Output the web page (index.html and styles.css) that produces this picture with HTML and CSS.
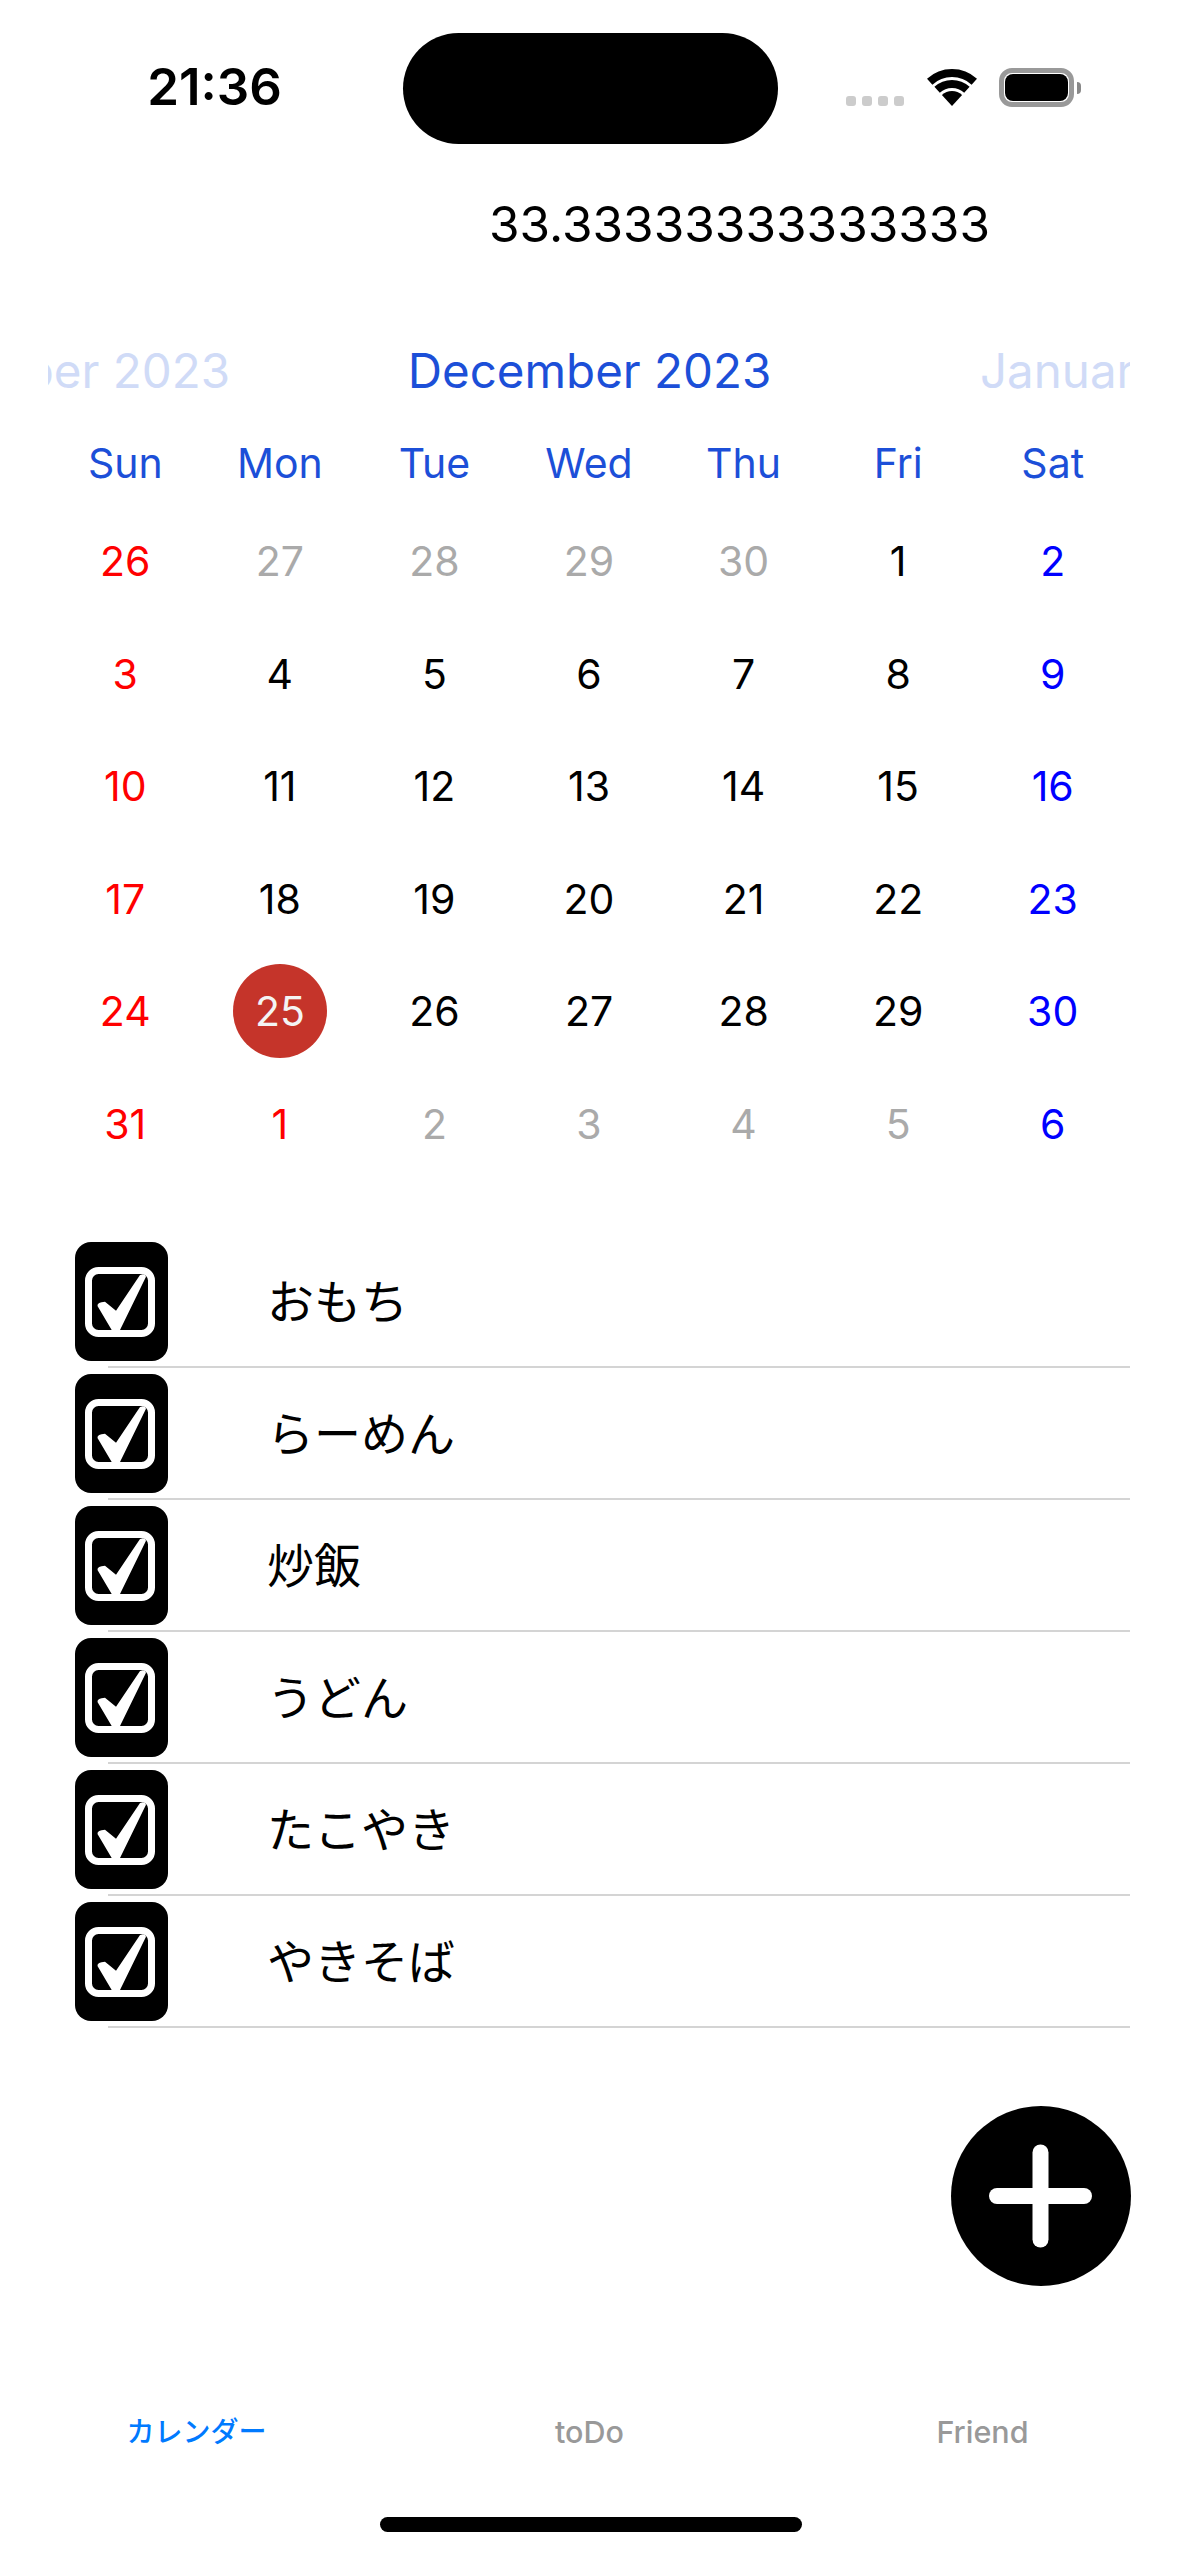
FILE: index.html
```html
<!DOCTYPE html>
<html lang="ja">

<head>
  <meta charset="utf8">
  <title>カレンダー</title>
  <link rel="stylesheet" href="styles.css">
</head>

<body>
  <header class="status">
    <div class="time">21:36</div>
    <div class="island"></div>
    <div class="indicators">
      <div class="signal"><i></i><i></i><i></i><i></i></div>
      <svg class="wifi" width="50" height="37" viewBox="0 0 50 37">
        <path d="M2.7 12.7A33 33 0 0 1 47.3 12.7" fill="none" stroke="#000" stroke-width="8" />
        <path d="M10.1 20.8A22 22 0 0 1 39.9 20.8" fill="none" stroke="#000" stroke-width="8" />
        <path d="M25 37L14.9 25.9A15 15 0 0 1 35.1 25.9Z" />
      </svg>
      <div class="battery"><div class="battery-level"></div></div>
      <div class="battery-nub"></div>
    </div>
  </header>

  <p class="balance">33.33333333333333</p>

  <section class="calendar">
    <div class="months">
      <div class="month-side month-prev"><span>November 2023</span></div>
      <div class="month-now">December 2023</div>
      <div class="month-side month-next"><span>January 2024</span></div>
    </div>
    <div class="weekdays">
      <div>Sun</div><div>Mon</div><div>Tue</div><div>Wed</div><div>Thu</div><div>Fri</div><div>Sat</div>
    </div>
    <div class="days">
      <div class="sun">26</div><div class="off">27</div><div class="off">28</div><div class="off">29</div><div class="off">30</div><div>1</div><div class="sat">2</div>
      <div class="sun">3</div><div>4</div><div>5</div><div>6</div><div>7</div><div>8</div><div class="sat">9</div>
      <div class="sun">10</div><div>11</div><div>12</div><div>13</div><div>14</div><div>15</div><div class="sat">16</div>
      <div class="sun">17</div><div>18</div><div>19</div><div>20</div><div>21</div><div>22</div><div class="sat">23</div>
      <div class="sun">24</div><div><span class="today">25</span></div><div>26</div><div>27</div><div>28</div><div>29</div><div class="sat">30</div>
      <div class="sun">31</div><div class="sun">1</div><div class="off">2</div><div class="off">3</div><div class="off">4</div><div class="off">5</div><div class="sat">6</div>
    </div>
  </section>

  <ul class="todos">
    <li>
      <span class="check"><svg width="70" height="70" viewBox="0 0 70 70"><rect x="3.5" y="3.5" width="63" height="63" rx="10" fill="none" stroke="#fff" stroke-width="7" /><path d="M12.5 39Q12 35 20 34.7L31 43.7L55 8Q60 6 61 9.7L35 63H26.7Z" fill="#fff" /></svg></span>
      <span class="todo-text">おもち</span>
    </li>
    <li>
      <span class="check"><svg width="70" height="70" viewBox="0 0 70 70"><rect x="3.5" y="3.5" width="63" height="63" rx="10" fill="none" stroke="#fff" stroke-width="7" /><path d="M12.5 39Q12 35 20 34.7L31 43.7L55 8Q60 6 61 9.7L35 63H26.7Z" fill="#fff" /></svg></span>
      <span class="todo-text">らーめん</span>
    </li>
    <li>
      <span class="check"><svg width="70" height="70" viewBox="0 0 70 70"><rect x="3.5" y="3.5" width="63" height="63" rx="10" fill="none" stroke="#fff" stroke-width="7" /><path d="M12.5 39Q12 35 20 34.7L31 43.7L55 8Q60 6 61 9.7L35 63H26.7Z" fill="#fff" /></svg></span>
      <span class="todo-text">炒飯</span>
    </li>
    <li>
      <span class="check"><svg width="70" height="70" viewBox="0 0 70 70"><rect x="3.5" y="3.5" width="63" height="63" rx="10" fill="none" stroke="#fff" stroke-width="7" /><path d="M12.5 39Q12 35 20 34.7L31 43.7L55 8Q60 6 61 9.7L35 63H26.7Z" fill="#fff" /></svg></span>
      <span class="todo-text">うどん</span>
    </li>
    <li>
      <span class="check"><svg width="70" height="70" viewBox="0 0 70 70"><rect x="3.5" y="3.5" width="63" height="63" rx="10" fill="none" stroke="#fff" stroke-width="7" /><path d="M12.5 39Q12 35 20 34.7L31 43.7L55 8Q60 6 61 9.7L35 63H26.7Z" fill="#fff" /></svg></span>
      <span class="todo-text">たこやき</span>
    </li>
    <li>
      <span class="check"><svg width="70" height="70" viewBox="0 0 70 70"><rect x="3.5" y="3.5" width="63" height="63" rx="10" fill="none" stroke="#fff" stroke-width="7" /><path d="M12.5 39Q12 35 20 34.7L31 43.7L55 8Q60 6 61 9.7L35 63H26.7Z" fill="#fff" /></svg></span>
      <span class="todo-text">やきそば</span>
    </li>
  </ul>

  <button class="fab" aria-label="追加"></button>

  <nav class="tabs">
    <div class="tab tab-active">カレンダー</div>
    <div class="tab tab-latin">toDo</div>
    <div class="tab tab-latin">Friend</div>
  </nav>
  <div class="home-bar"></div>
</body>

</html>
```

FILE: styles.css
```css
* {
  box-sizing: border-box;
}

body {
  position: relative;
  width: 1179px;
  height: 2556px;
  margin: 0;
  overflow: hidden;
  background: #FFF;
  color: #000;
  font-family: Inter, "Noto Sans CJK JP", sans-serif;
}

/* status bar */
.status {
  display: flex;
  height: 144px;
  padding-top: 33px;
}

.time {
  width: 403px;
  padding: 35px 0 0 26px;
  font-size: 51px;
  font-weight: 600;
  line-height: 38px;
  text-align: center;
}

.island {
  width: 375px;
  height: 111px;
  border-radius: 56px;
  background: #000;
}

.indicators {
  display: flex;
  align-items: flex-end;
  height: 74px;
  margin-left: 68px;
}

.signal {
  display: flex;
  gap: 6px;
  margin-bottom: 1px;
}

.signal i {
  width: 10px;
  height: 10px;
  border-radius: 3px;
  background: #CCC;
}

.wifi {
  margin: 0 22px 1px 23px;
  fill: #000;
}

.battery {
  width: 75px;
  height: 39px;
  padding: 1px;
  border: 5px solid #999;
  border-radius: 13px;
}

.battery-level {
  height: 100%;
  border-radius: 8px;
  background: #000;
}

.battery-nub {
  width: 4px;
  height: 12px;
  margin: 0 0 13px 3px;
  border-radius: 0 6px 6px 0;
  background: #888;
}

.balance {
  margin: 0;
  padding: 54px 0 0 489px;
  font-size: 49.5px;
  line-height: 52px;
  white-space: nowrap;
}

/* calendar */
.calendar {
  margin: 0 49px 0 48px;
  padding-top: 91px;
}

.months {
  display: grid;
  grid-template-columns: 182px 1fr 150px;
  font-size: 47.5px;
  line-height: 60px;
  color: #1C4FD8;
  white-space: nowrap;
}

.month-now {
  padding-right: 31px;
  text-align: center;
}

.month-side {
  display: flex;
  overflow: hidden;
  color: #D0DBF7;
}

.month-prev {
  justify-content: flex-end;
}

.weekdays,
.days {
  display: grid;
  grid-template-columns: repeat(7, 1fr);
  text-align: center;
}

.weekdays {
  margin-top: 37px;
  font-size: 41px;
  line-height: 50px;
  color: #1C4FD8;
}

.days {
  grid-auto-rows: 112.5px;
  margin-top: 17px;
  font-size: 41px;
}

.days > div {
  display: flex;
  align-items: center;
  justify-content: center;
}

.days .sun {
  color: #F00;
}

.days .sat {
  color: #00F;
}

.days .off {
  color: #AAA;
}

.today {
  display: flex;
  align-items: center;
  justify-content: center;
  width: 94px;
  height: 94px;
  border-radius: 50%;
  background: #C5342A;
  color: #F4F4F4;
}

/* todo list */
.todos {
  margin: 56px 49px 0 108px;
  padding: 0;
  list-style: none;
}

.todos li {
  display: flex;
  align-items: center;
  height: 132px;
  padding: 6px 0 5px;
  border-bottom: 2px solid #D4D4D4;
}

.check {
  display: flex;
  flex: none;
  align-items: center;
  justify-content: center;
  width: 93px;
  height: 119px;
  margin-left: -33px;
  padding-right: 3px;
  border-radius: 16px;
  background: #000;
}

.todo-text {
  margin-left: 99px;
  padding-bottom: 7px;
  font-size: 47px;
}

/* floating add button */
.fab {
  position: absolute;
  left: 951px;
  top: 2106px;
  width: 180px;
  height: 180px;
  padding: 0;
  border: 0;
  border-radius: 50%;
  background: #000;
}

.fab::before,
.fab::after {
  content: "";
  position: absolute;
  left: 38px;
  top: 82px;
  width: 103px;
  height: 16px;
  border-radius: 8px;
  background: #FFF;
}

.fab::after {
  transform: rotate(90deg);
}

/* tab bar */
.tabs {
  position: absolute;
  left: 0;
  right: 0;
  top: 2414px;
  display: grid;
  grid-template-columns: repeat(3, 393px);
}

.tab {
  font-size: 28px;
  font-weight: 500;
  line-height: 36px;
  color: #999;
  text-align: center;
}

.tab-latin {
  font-size: 30.5px;
}

.tab-active {
  color: #007AFF;
}

.home-bar {
  position: absolute;
  left: 380px;
  top: 2517px;
  width: 422px;
  height: 15px;
  border-radius: 8px;
  background: #000;
}
```
